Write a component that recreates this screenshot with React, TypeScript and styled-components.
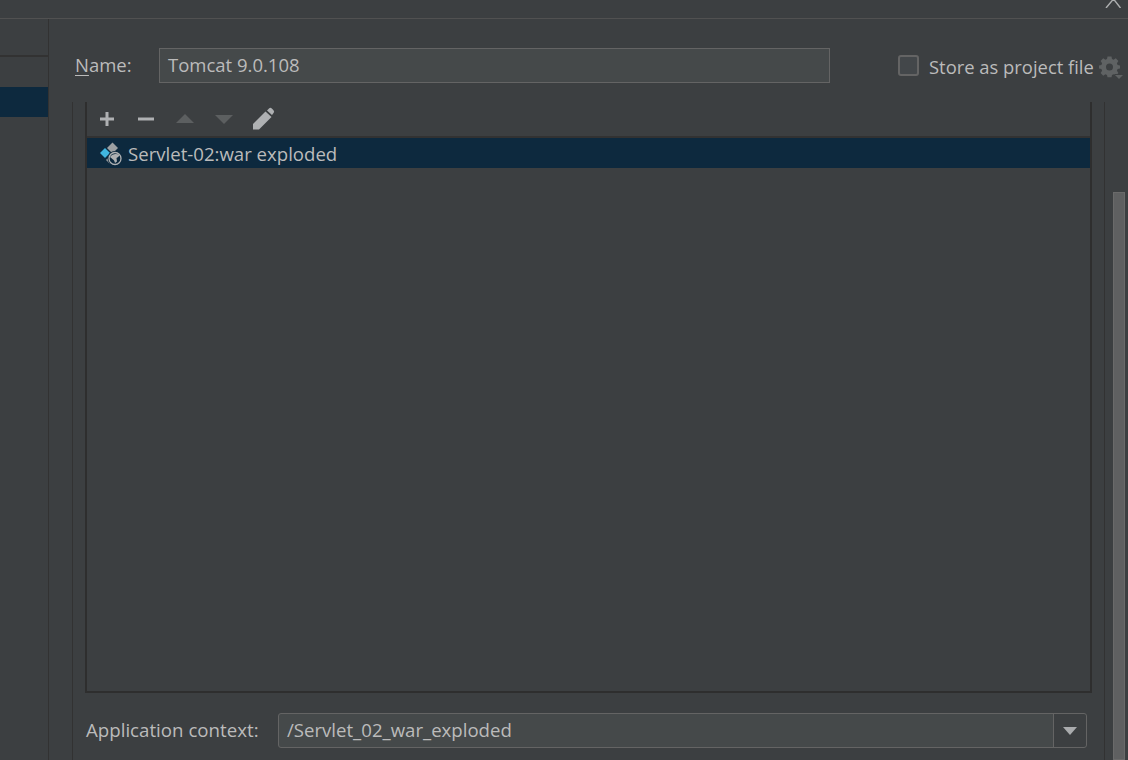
import React from "react";
import styled, { createGlobalStyle } from "styled-components";

const GlobalStyle = createGlobalStyle`
  html, body {
    margin: 0;
    padding: 0;
    background: #3c3f41;
  }
  body {
    font-family: "Open Sans", "Noto Sans", "Liberation Sans", sans-serif;
    color: #bbbbbb;
    overflow: hidden;
  }
`;

const Page = styled.div`
  width: 1128px;
  height: 760px;
  display: flex;
  flex-direction: column;
  overflow: hidden;
  background: #3c3f41;
`;

const TitleBar = styled.div`
  height: 18px;
  flex: none;
  display: flex;
  justify-content: flex-end;
  align-items: flex-start;
  border-bottom: 1px solid #515151;
  padding-right: 6px;
  overflow: hidden;
`;

const Body = styled.div`
  flex: 1;
  min-height: 0;
  display: flex;
`;

const Sidebar = styled.div`
  width: 48px;
  flex: none;
  border-right: 1px solid #323232;
  display: flex;
  flex-direction: column;
  padding-top: 36px;
`;

const SidebarRule = styled.div`
  height: 2px;
  background: #323232;
`;

const SidebarSelected = styled.div`
  height: 30px;
  margin-top: 30px;
  background: #0d293e;
`;

const Main = styled.div`
  flex: 1;
  min-width: 0;
  display: flex;
  flex-direction: column;
  padding-top: 29px;
`;

const NameRow = styled.div`
  height: 35px;
  flex: none;
  display: flex;
  align-items: center;
  padding-left: 26px;
`;

const Label = styled.label<{ $size?: number }>`
  font-size: ${(p) => p.$size ?? 18.5}px;
  line-height: 24px;
  white-space: nowrap;
`;

const NameLabel = styled(Label)`
  width: 84px;
  flex: none;
  padding-bottom: 2px;
`;

const Mnemonic = styled.span`
  text-decoration: underline;
  text-underline-offset: 3px;
`;

const NameInput = styled.div`
  width: 671px;
  height: 35px;
  box-sizing: border-box;
  flex: none;
  border: 1px solid #646464;
  background: #45494a;
  padding-left: 8px;
  font-size: 18.5px;
  line-height: 31px;
`;

const StoreOption = styled.div`
  margin-left: 68px;
  display: flex;
  align-items: center;
  position: relative;
  top: 1px;
`;

const CheckBox = styled.span`
  width: 21px;
  height: 21px;
  box-sizing: border-box;
  border: 2px solid #646464;
  border-radius: 3px;
  background: #43474a;
  margin: -2px 10px 0 0;
`;

const GearIcon = styled.svg`
  width: 24px;
  height: 24px;
  margin-left: 5px;
  flex: none;
`;

const Settings = styled.div`
  flex: 1;
  min-height: 0;
  margin-top: 19px;
  margin-left: 23px;
  width: 1033px;
  border-left: 1px solid #323232;
  border-right: 1px solid #323232;
  display: flex;
  flex-direction: column;
  padding: 0 12px;
`;

const Deployments = styled.div`
  height: 591px;
  flex: none;
  box-sizing: border-box;
  border-left: 2px solid #2e2e2e;
  border-right: 2px solid #2e2e2e;
  border-bottom: 2px solid #2e2e2e;
  display: flex;
  flex-direction: column;
`;

const Toolbar = styled.div`
  height: 34px;
  flex: none;
  display: flex;
  align-items: center;
  padding-left: 8px;
  gap: 15px;
  border-bottom: 2px solid #323232;
`;

const ToolIcon = styled.svg`
  width: 24px;
  height: 24px;
  flex: none;
`;

const ArtifactRow = styled.div`
  height: 30px;
  flex: none;
  background: #0d293e;
  display: flex;
  align-items: center;
  padding-left: 11px;
  font-size: 18.6px;
`;

const ArtifactIcon = styled.svg`
  width: 26px;
  height: 26px;
  flex: none;
  margin-right: 4px;
`;

const ContextRow = styled.div`
  margin-top: 20px;
  padding-left: 1px;
  display: flex;
  align-items: center;
`;

const ContextLabel = styled(Label)`
  width: 192px;
  flex: none;
  padding-bottom: 2px;
`;

const ComboBox = styled.div`
  width: 809px;
  height: 35px;
  box-sizing: border-box;
  flex: none;
  border: 1px solid #646464;
  border-radius: 3px;
  background: #45494a;
  display: flex;
  font-size: 18.6px;
  line-height: 31px;
`;

const ComboText = styled.div`
  flex: 1;
  padding-left: 8px;
`;

const ComboArrow = styled.div`
  width: 32px;
  flex: none;
  border-left: 1px solid #646464;
  background: #3c3f41;
  border-radius: 0 3px 3px 0;
  display: flex;
  align-items: center;
  justify-content: center;
`;

const Scrollbar = styled.div`
  width: 12px;
  flex: none;
  box-sizing: border-box;
  margin: 109px 3px 0 8px;
  background: #5f6061;
  border: 1px solid #6a6a6a;
`;

const ContentRow = styled.div`
  flex: 1;
  min-height: 0;
  display: flex;
`;

export default function App() {
  return (
    <Page>
      <GlobalStyle />
      <TitleBar>
        <svg width="18" height="8" viewBox="0 0 18 8">
          <path d="M2 8 L9.500 -1 L16.500 8" fill="none" stroke="#aeb0b1" strokeWidth="1.4" />
        </svg>
      </TitleBar>
      <Body>
        <Sidebar>
          <SidebarRule />
          <SidebarSelected />
        </Sidebar>
        <Main>
          <NameRow>
            <NameLabel>
              <Mnemonic>N</Mnemonic>ame:
            </NameLabel>
            <NameInput>Tomcat 9.0.108</NameInput>
            <StoreOption>
              <CheckBox />
              <Label $size={18.4}>Store as project file</Label>
              <GearIcon viewBox="0 0 24 24">
                <path
                  fill="#5f6263"
                  fillRule="evenodd"
                  d="M8.500 1.500h4l.5 2.600 1.600.7 2.200-1.500 2.600 2.800-1.500 2.200.7 1.600 2.400.5v3.200l-2.400.5-.7 1.600 1.500 2.200-2.600 2.800-2.200-1.500-1.600.7-.5 2.400h-4l-.5-2.400-1.600-.7-2.200 1.500-2.600-2.800 1.500-2.200-.7-1.600L0 13.600v-3.200l2.400-.5.7-1.600-1.500-2.200 2.600-2.800 2.200 1.500 1.600-.7zM10.500 8.500a3.500 3.500 0 1 0 0 7 3.500 3.500 0 0 0 0-7z"
                />
                <path d="M15 19h9l-4.500 5z" fill="#3c3f41" />
                <path d="M16 20h8l-4 4z" fill="#5f6263" />
              </GearIcon>
            </StoreOption>
          </NameRow>
          <ContentRow>
            <Settings>
              <Deployments>
                <Toolbar>
                  <ToolIcon viewBox="0 0 24 24">
                    <path d="M12 5v14M5 12h14" stroke="#afb1b3" strokeWidth="3" />
                  </ToolIcon>
                  <ToolIcon viewBox="0 0 24 24">
                    <path d="M4 12h16" stroke="#afb1b3" strokeWidth="3" />
                  </ToolIcon>
                  <ToolIcon viewBox="0 0 24 24">
                    <path d="M3 16l9-9 9 9z" fill="#5c5f60" />
                  </ToolIcon>
                  <ToolIcon viewBox="0 0 24 24">
                    <path d="M3 8l9 9 9-9z" fill="#5c5f60" />
                  </ToolIcon>
                  <ToolIcon viewBox="0 0 24 24">
                    <path d="M2 22.500v-5.500L14.500 4.500l6 5.500L8 22.500z" fill="#afb1b3" />
                    <path d="M16 3.500 18 1.500a2 2 0 0 1 2.800 0l1.700 1.700a2 2 0 0 1 0 2.800l-1.500 2z" fill="#afb1b3" />
                  </ToolIcon>
                </Toolbar>
                <ArtifactRow>
                  <ArtifactIcon viewBox="0 0 26 26">
                    <path d="M2 13l5-5 5 5-5 5z" fill="#40b6e0" />
                    <path d="M9 8l5.500-5.500L20 8l-5.500 5.500z" fill="#9da0a2" />
                    <path d="M8 20l3.500-3.500L15 20l-3.500 3.500z" fill="#9da0a2" />
                    <circle cx="17" cy="18.500" r="7.500" fill="#0d293e" />
                    <circle cx="17" cy="18.500" r="6" fill="#0d293e" stroke="#afb1b3" strokeWidth="1.300" />
                    <path d="M12 17c2-3.500 6-3.500 9.500-2.500-.5 2.500-2 3-3 3.500l.5 3.500-2 1.500c-.5-2-1-3-2-3.500z" fill="#afb1b3" />
                  </ArtifactIcon>
                  Servlet-02:war exploded
                </ArtifactRow>
              </Deployments>
              <ContextRow>
                <ContextLabel $size={18.7}>Application context:</ContextLabel>
                <ComboBox>
                  <ComboText>/Servlet_02_war_exploded</ComboText>
                  <ComboArrow>
                    <svg width="14" height="8" viewBox="0 0 14 8">
                      <path d="M0 0h14L7 8z" fill="#a9abad" />
                    </svg>
                  </ComboArrow>
                </ComboBox>
              </ContextRow>
            </Settings>
            <Scrollbar />
          </ContentRow>
        </Main>
      </Body>
    </Page>
  );
}
